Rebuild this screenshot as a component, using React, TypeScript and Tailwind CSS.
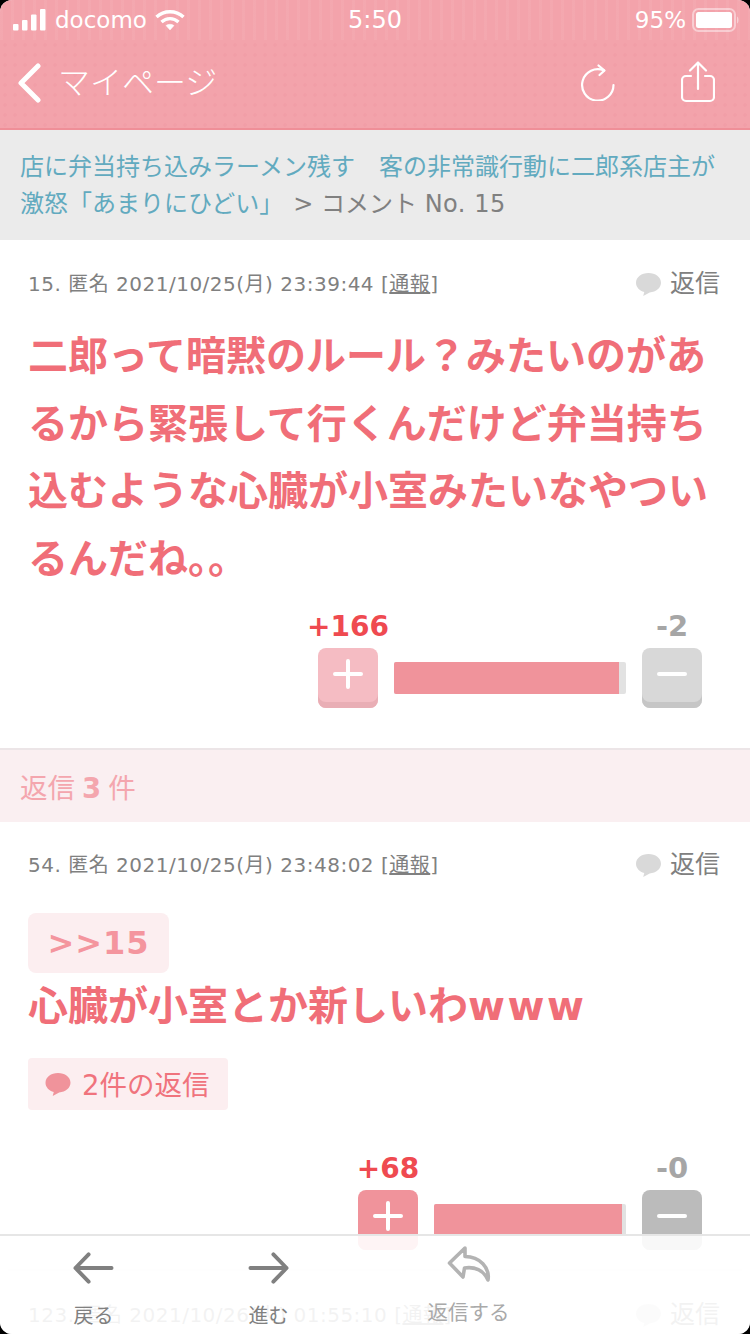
const FONT = "font-['DejaVu_Sans','Noto_Sans_CJK_JP',sans-serif]";

function Bubble({ className, color }: { className?: string; color: string }) {
  return (
    <svg className={className} viewBox="0 0 28 26" fill={color}>
      <path d="M14 1C6.800 1 1 5.200 1 11.200c0 4.700 3.800 8.400 8.600 9.600L8.500 25l6.700-3.800C22 20.700 27 16.500 27 11.200 27 5.200 21.200 1 14 1z" />
    </svg>
  );
}

function Meta({ head, time }: { head: string; time: string }) {
  return (
    <div className="flex h-[42px] pt-[2px] items-center justify-between">
      <div className="text-[20px] text-[#808080] whitespace-nowrap tracking-[0.5px]">
        {head} {time} [<span className="underline">通報</span>]
      </div>
      <div className="flex items-center text-[#808080] text-[25px]">
        <Bubble className="w-[27px] h-[25px] mr-[8px]" color="#d9d9d9" />
        <span className="w-[52px] whitespace-nowrap">返信</span>
      </div>
    </div>
  );
}

function Votes({
  plus,
  minus,
  trackClass,
  fillClass,
  plusBg,
  plusEdge,
  minusBg,
  minusEdge,
}: {
  plus: string;
  minus: string;
  trackClass: string;
  fillClass: string;
  plusBg: string;
  plusEdge: string;
  minusBg: string;
  minusEdge: string;
}) {
  return (
    <div className="flex justify-end pr-[20px]">
      <div className="flex flex-col items-center w-[60px]">
        <div className="h-[41px] leading-[39px] text-[28px] font-bold text-[#ef4a50] whitespace-nowrap">{plus}</div>
        <div
          className="w-[60px] h-[60px] rounded-[8px] flex pt-[11px] justify-center"
          style={{ backgroundColor: plusBg, boxShadow: `inset 0 -6px 0 ${plusEdge}` }}
        >
          <svg className="w-[30px] h-[30px]" viewBox="0 0 30 30" stroke="#fff" strokeWidth="4" strokeLinecap="round">
            <path d="M15 2v26M2 15h26" />
          </svg>
        </div>
      </div>
      <div className="flex-none pt-[55px] px-[16px]">
        <div className={`h-[32px] rounded-[2px] bg-[#e2e2e2] overflow-hidden ${trackClass}`}>
          <div className={`h-full bg-[#f0939b] ${fillClass}`} />
        </div>
      </div>
      <div className="flex flex-col items-center w-[60px]">
        <div className="h-[41px] leading-[39px] text-[29px] font-bold text-[#a6a6a6]">{minus}</div>
        <div
          className="w-[60px] h-[60px] rounded-[8px] flex pt-[11px] justify-center"
          style={{ backgroundColor: minusBg, boxShadow: `inset 0 -6px 0 ${minusEdge}` }}
        >
          <svg className="w-[30px] h-[30px]" viewBox="0 0 30 30" stroke="#fff" strokeWidth="4" strokeLinecap="round">
            <path d="M2 15h26" />
          </svg>
        </div>
      </div>
    </div>
  );
}

export default function App() {
  return (
    <div className={`w-[750px] h-[1334px] bg-black overflow-hidden ${FONT}`}>
      <div className="relative w-full h-full bg-white rounded-[12px] overflow-hidden">
        <header className="h-[130px] bg-[#f3a3ab] border-b-2 border-[#ef8f98]">
          <div className="h-[40px] grid grid-cols-3 items-center text-white text-[24px] pl-[13px] pr-[10px] bg-[repeating-linear-gradient(90deg,rgba(255,255,255,0.05)_0px,rgba(255,255,255,0.05)_3px,rgba(0,0,0,0)_3px,rgba(0,0,0,0)_11px)]">
            <div className="flex items-center">
              <svg className="w-[34px] h-[22px]" viewBox="0 0 34 22" fill="#fff">
                <rect x="0" y="15" width="5.500" height="6.500" rx="1" />
                <rect x="9" y="11" width="5.500" height="10.500" rx="1" />
                <rect x="18" y="5.500" width="5.500" height="16" rx="1" />
                <rect x="27" y="0" width="5.500" height="21.500" rx="1" />
              </svg>
              <span className="ml-[8px] text-[23px] leading-none">docomo</span>
              <svg className="ml-[8px] w-[30px] h-[22px]" viewBox="0 0 30 22" fill="none" stroke="#fff" strokeWidth="3.400">
                <path d="M1.500 8C9 1 21 1 28.500 8" />
                <path d="M6.500 13c5-4.500 12-4.500 17 0" />
                <path d="M15 21l-4-4.400c2.400-1.800 5.600-1.800 8 0z" fill="#fff" strokeWidth="0.500" />
              </svg>
            </div>
            <div className="text-center font-medium pr-[3px]">5:50</div>
            <div className="flex items-center justify-end">
              <span className="text-[23px] leading-none">95%</span>
              <svg className="ml-[6px] w-[48px] h-[24px]" viewBox="0 0 48 24">
                <rect x="1" y="1" width="42" height="22" rx="5.500" fill="none" stroke="#fff" strokeOpacity="0.45" strokeWidth="2" />
                <rect x="4" y="4" width="36" height="16" rx="2.500" fill="#fff" />
                <path d="M45 8.500c2 .8 2 6.200 0 7z" fill="#fff" fillOpacity="0.45" />
              </svg>
            </div>
          </div>
          <div className="h-[88px] flex items-center pl-[17px] pr-[35px] text-white bg-[radial-gradient(circle,rgba(230,120,135,0.10)_1.5px,rgba(0,0,0,0)_2px)] bg-[length:10px_10px]">
            <svg className="w-[26px] h-[40px] mt-[-2px]" viewBox="0 0 26 40" fill="none" stroke="#fff" strokeWidth="5" strokeLinecap="round" strokeLinejoin="round">
              <path d="M21 3L4 20l17 17" />
            </svg>
            <span className="ml-[15px] text-[32px] font-light leading-none mt-[-2px]">マイページ</span>
            <svg className="ml-auto w-[36px] h-[38px] mt-[-4px]" viewBox="0 0 36 38" fill="none" stroke="#fff" strokeWidth="2.200" strokeLinecap="round" strokeLinejoin="round">
              <path d="M24 7.500A15.700 15.700 0 1 0 33.500 22" />
              <path d="M18.500 2.500L24.500 7.500L19.500 12" />
            </svg>
            <svg className="ml-[65px] w-[34px] h-[42px] mt-[-4px]" viewBox="0 0 34 42" fill="none" stroke="#fff" strokeWidth="2.200" strokeLinecap="round" strokeLinejoin="round">
              <path d="M17 28V2M9 9.500L17 1.500l8 8" />
              <path d="M10 15H5a4 4 0 0 0-4 4v17a4 4 0 0 0 4 4h24a4 4 0 0 0 4-4V19a4 4 0 0 0-4-4h-5" />
            </svg>
          </div>
        </header>

        <nav className="h-[110px] bg-[#ebebeb] pl-[20px] pt-[19px] text-[24px] leading-[36px] text-[#808080]">
          <div className="text-[#62aabf] whitespace-nowrap">店に弁当持ち込みラーメン残す　客の非常識行動に二郎系店主が</div>
          <div className="whitespace-nowrap mt-[1px]">
            <span className="text-[#62aabf]">激怒「あまりにひどい」</span>
            <span className="ml-[10px]">&gt; コメント <span className="tracking-[0.5px]">No. 15</span></span>
          </div>
        </nav>

        <section className="h-[508px] pt-[22px] px-[28px]">
          <Meta head="15. 匿名" time="2021/10/25(月) 23:39:44" />
          <p className="mt-[19px] text-[40px] leading-[67.5px] font-bold text-[#f06e78] w-[694px]">
            二郎って暗黙のルール{"\uFF1F"}みたいのがあるから緊張して行くんだけど弁当持ち込むような心臓が小室みたいなやついるんだね。。
          </p>
          <div className="mt-[14px]">
            <Votes
              plus="+166"
              minus="-2"
              trackClass="w-[232px]"
              fillClass="w-[225px]"
              plusBg="#f5bcc3"
              plusEdge="#e9aeb5"
              minusBg="#d8d8d8"
              minusEdge="#c6c6c6"
            />
          </div>
        </section>

        <div className="h-[74px] border-t-2 border-[#ece5e7] bg-[#faeff1] pl-[20px] flex items-center text-[27.5px] text-[#f4a6ae]">
          <span className="mt-[6px] flex">
            返信<b className="font-bold ml-[7px]">3</b><span className="ml-[7px]">件</span>
          </span>
        </div>

        <section className="pt-[21px] px-[28px]">
          <Meta head="54. 匿名" time="2021/10/25(月) 23:48:02" />
          <div className="mt-[28px] w-[141px] h-[60px] rounded-[8px] bg-[#fceef0] flex items-center justify-center text-[32px] font-bold text-[#f4959e] tracking-[1px]">
            &gt;&gt;15
          </div>
          <p className="h-[66px] leading-[66px] text-[40px] font-bold text-[#f06e78] whitespace-nowrap">
            心臓が小室とか新しいわ<span className="tracking-[2.5px]">www</span>
          </p>
          <div className="mt-[19px] w-[200px] h-[52px] rounded-[4px] bg-[#fceef0] flex items-center pl-[16px] text-[27.5px] text-[#f0737d]">
            <Bubble className="w-[28px] h-[25px] mr-[10px]" color="#f0939b" />
            <span className="whitespace-nowrap mt-[4px]">2件の返信</span>
          </div>
          <div className="mt-[39px]">
            <Votes
              plus="+68"
              minus="-0"
              trackClass="w-[192px]"
              fillClass="w-[188px]"
              plusBg="#f0939b"
              plusEdge="#f0939b"
              minusBg="#bbbbbb"
              minusEdge="#bbbbbb"
            />
          </div>
          <div className="-mx-[20px] mt-[19px] h-[2px] bg-[#f2f2f2]" />
          <div className="pt-[22px]">
            <Meta head="123. 匿名" time="2021/10/26(火) 01:55:10" />
          </div>
        </section>

        <div className="absolute left-0 right-0 bottom-0 h-[100px] border-t-2 border-[#e6e6e6] bg-white/90 flex pl-[6px]">
          <div className="w-[175px] flex flex-col items-center pt-[15px] text-[#808080]">
            <svg className="w-[41px] h-[34px]" viewBox="0 0 42 34" fill="none" stroke="#808080" strokeWidth="4" strokeLinecap="round" strokeLinejoin="round">
              <path d="M39.500 17H2.500M16 3L2.500 17 16 31" />
            </svg>
            <span className="text-[20px] leading-[28px] mt-[17px]">戻る</span>
          </div>
          <div className="w-[175px] flex flex-col items-center pt-[15px] text-[#808080]">
            <svg className="w-[41px] h-[34px]" viewBox="0 0 42 34" fill="none" stroke="#808080" strokeWidth="4" strokeLinecap="round" strokeLinejoin="round">
              <path d="M2.500 17h37M26 3l13.500 14L26 31" />
            </svg>
            <span className="text-[20px] leading-[28px] mt-[17px]">進む</span>
          </div>
          <div className="w-[225px] flex flex-col items-center pt-[10px] text-[#a9a9a9]">
            <svg className="w-[44px] h-[36px]" viewBox="0 0 44 36" fill="none" stroke="#b3b3b3" strokeWidth="3.600" strokeLinecap="round" strokeLinejoin="round">
              <path d="M18 2L2.500 17 16 31l1.500-9c10-1.500 19 2 23.500 12C43 22 33 10.500 18 10.500z" />
            </svg>
            <span className="text-[20.5px] leading-[28px] mt-[17px]">返信する</span>
          </div>
        </div>
      </div>
    </div>
  );
}
